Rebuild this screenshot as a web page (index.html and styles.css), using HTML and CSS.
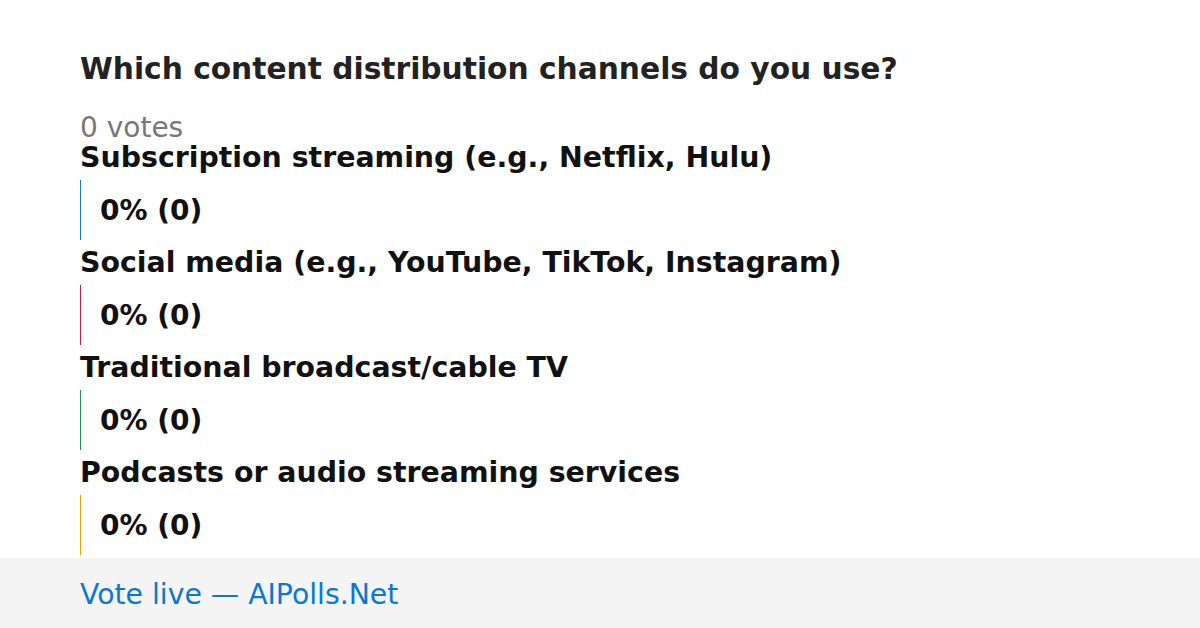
FILE: index.html
```html
<!DOCTYPE html>
<html>
<head>
<meta charset="utf-8">
<link rel="stylesheet" href="styles.css">
</head>
<body>
<div class="page">
  <main class="poll">
    <h1 class="title">Which content distribution channels do you use?</h1>
    <div class="votes">0 votes</div>
    <div class="option">
      <div class="label">Subscription streaming (e.g., Netflix, Hulu)</div>
      <div class="bar bar-blue"><span class="pct">0% (0)</span></div>
    </div>
    <div class="option">
      <div class="label">Social media (e.g., YouTube, TikTok, Instagram)</div>
      <div class="bar bar-red"><span class="pct">0% (0)</span></div>
    </div>
    <div class="option">
      <div class="label">Traditional broadcast/cable TV</div>
      <div class="bar bar-green"><span class="pct">0% (0)</span></div>
    </div>
    <div class="option">
      <div class="label">Podcasts or audio streaming services</div>
      <div class="bar bar-orange"><span class="pct">0% (0)</span></div>
    </div>
  </main>
  <footer class="footer">Vote live — AIPolls.Net</footer>
</div>
</body>
</html>
```

FILE: styles.css
```css
* { box-sizing: border-box; }
html, body { margin: 0; padding: 0; background: #fff; }
body {
  font-family: "DejaVu Sans", "Liberation Sans", sans-serif;
  width: 1200px;
  height: 628px;
  overflow: hidden;
}
.page {
  display: flex;
  flex-direction: column;
  height: 628px;
}
.poll {
  flex: 1;
  padding: 51px 80px 0 80px;
  display: flex;
  flex-direction: column;
  overflow: hidden;
}
.title {
  margin: 0;
  font-size: 29.7px;
  line-height: 36px;
  font-weight: bold;
  color: #222;
}
.votes {
  margin-top: 26px;
  font-size: 28px;
  line-height: 30px;
  color: #777;
}
.option {
  margin-bottom: 8px;
}
.label {
  font-size: 28.4px;
  line-height: 30px;
  font-weight: bold;
  color: #111;
  margin-bottom: 7px;
}
.bar {
  height: 60px;
  border-left: 1px solid;
  display: flex;
  align-items: center;
  padding-left: 19px;
}
.bar-blue { border-color: #0a7bd6; }
.bar-red { border-color: #e0173a; }
.bar-green { border-color: #1a9a48; }
.bar-orange { border-color: #f59c00; }
.pct {
  font-size: 28px;
  font-weight: bold;
  color: #111;
}
.footer {
  height: 70px;
  flex: none;
  background: #f4f4f4;
  color: #0a78d2;
  font-size: 28.3px;
  padding: 2px 0 0 80px;
  display: flex;
  align-items: center;
}
```
